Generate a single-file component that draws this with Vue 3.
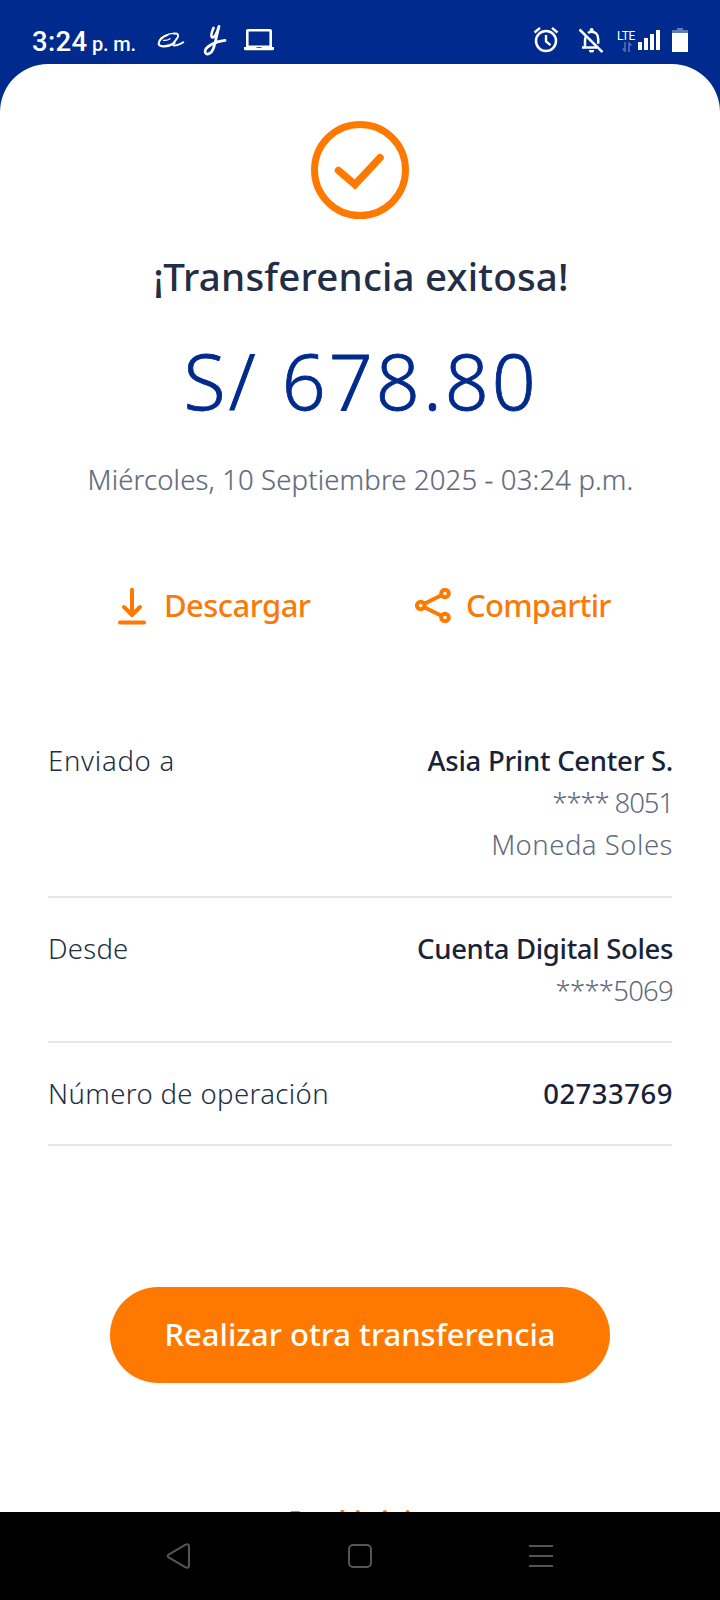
<script setup>
const details = [
  {
    label: 'Enviado a', labelClass: 'ls-08',
    lines: [
      { text: 'Asia Print Center S.', cls: 'strong ls-n03' },
      { text: '**** 8051', cls: 'muted ls-n11' },
      { text: 'Moneda Soles', cls: 'muted ls-05' },
    ],
  },
  {
    label: 'Desde', labelClass: 'ls-03',
    lines: [
      { text: 'Cuenta Digital Soles', cls: 'strong ls-n04' },
      { text: '****5069', cls: 'muted ls-n08' },
    ],
  },
  {
    label: 'Número de operación', labelClass: 'ls-04',
    lines: [{ text: '02733769', cls: 'strong ls-05' }],
  },
]
</script>

<template>
  <div class="screen">
    <header class="status">
      <div class="clock"><span class="time">3:24</span><span class="ampm">p. m.</span></div>
      <svg class="ic-swirl" width="30" height="32" viewBox="156 24 30 32" fill="none" stroke="#fff" stroke-linecap="round" stroke-linejoin="round">
        <path stroke-width="2.200" d="M167.500 35c-4.500 1.200-8.800 5-8.800 8.700 0 4 9.500 3.400 15.800-.7" />
        <path stroke-width="1.300" d="M163.500 40.300c2.500.2 5-.4 6.500-1.600M161 38.500c4-3.500 11.500-6.300 15-4.700" />
        <path stroke-width="1.900" d="M173.500 33.600c4.500-.8 5.700 1.400 3.800 4.400-1.700 2.700-4.900 5.200-4.300 6.800.8 1.700 6.800-.1 10.300-2.600" />
      </svg>
      <svg class="ic-script" width="26" height="32" viewBox="202 24 26 32" fill="none" stroke="#fff" stroke-width="2.700" stroke-linecap="round" stroke-linejoin="round">
        <path d="M213.500 28c-1.500 3.500-3.200 8.300-1.300 9.300 2.300 1 4.800-4.300 6.800-11-2.200 8.500-3.700 17-5.700 22.500-1.700 4.600-6.300 6.700-7.800 4-1.500-2.900 2.500-6.500 6.800-8.800 4-2 8.500-3.200 12.700-3.600" />
      </svg>
      <svg class="ic-laptop" width="32" height="24" viewBox="243 28 32 24" fill="#fff">
        <path fill-rule="evenodd" d="M248 29h22a2 2 0 0 1 2 2v16h-26V31a2 2 0 0 1 2-2zm.600 2.500V45.500h20.800V31.500z" />
        <path fill-rule="evenodd" d="M244 47h30v2q0 1.300-1.300 1.300h-27.400q-1.300 0-1.300-1.300zm12.500-.5v1.300h5v-1.300z" />
      </svg>

      <svg class="ic-alarm" width="26" height="28" viewBox="533 26 26 28" fill="none" stroke="#fff">
        <circle cx="546" cy="41" r="10" stroke-width="2.500" />
        <path stroke-width="2.400" d="M546 35v6.500l4.500 3.600M534.500 32.500l5.500-4.600M557.500 32.500l-5.500-4.600" />
      </svg>
      <svg class="ic-bell" width="26" height="28" viewBox="578 26 26 28" fill="none" stroke="#fff">
        <path stroke-width="2.500" d="M585.900 36.500c-.7 1.300-.9 2.500-.9 4v6.300M582 47.500h15M588 33c1-.9 2.200-1.300 3.500-1.300 3.800 0 6.700 2.900 6.700 7.300v4.700" />
        <path fill="#fff" stroke="none" d="M589.700 31v-1.200a1.900 1.900 0 0 1 3.800 0V31zM588.900 50h5.200a2.600 2.600 0 0 1-5.200 0z" />
        <path stroke-width="2.500" d="M579.500 29.500l23 22.700" />
      </svg>
      <div class="network">
        <span class="lte">LTE</span>
        <svg class="arrows" width="10" height="10" viewBox="0 0 10 10" fill="none" stroke="#fff" stroke-width="1.500" opacity=".35">
          <path d="M3 0v9L.6 6.500M7 10V1l2.400 2.500" />
        </svg>
      </div>
      <svg class="ic-signal" width="22" height="21" viewBox="0 0 22 21" fill="#fff">
        <path d="M0 12h4v8H0zM6 8h4v12H6zM12 4h4v16h-4zM18 0h4v20h-4z" />
      </svg>
      <svg class="ic-battery" width="16" height="24" viewBox="0 0 16 24" fill="#fff">
        <path opacity=".38" d="M5 0h6v2h5v3H0V2h5z" /><path d="M0 5h16v19H0z" />
      </svg>
    </header>

    <main class="sheet">
      <svg class="success" width="98" height="98" viewBox="0 0 98 98" fill="none" stroke="#ff7900">
        <circle cx="49" cy="49" r="45.500" stroke-width="7" />
        <path d="M27.500 49.500L44 63.500 69 36.800" stroke-width="7.500" stroke-linecap="round" />
      </svg>
      <h1 class="title">¡Transferencia exitosa!</h1>
      <div class="amount">S/ 678.80</div>
      <div class="date">Miércoles, 10 Septiembre 2025 - 03:24 p.m.</div>

      <div class="actions">
        <div class="action download">
          <svg width="28" height="38" viewBox="0 0 28 38" fill="none" stroke="#ff7900" stroke-width="4" stroke-linecap="round" stroke-linejoin="round">
            <path d="M14 2.800V27M6 20l8 8 8-8M2 35.500h24" />
          </svg>
          <span>Descargar</span>
        </div>
        <div class="action share">
          <svg width="36" height="38" viewBox="0 0 36 38" fill="none" stroke="#ff7900" stroke-width="4">
            <circle cx="5.700" cy="18.500" r="3.800" /><circle cx="30" cy="6.500" r="3.800" /><circle cx="30" cy="30.500" r="3.800" />
            <path d="M9.300 16.700L26.400 8.300M9.300 20.300l17.100 8.400" />
          </svg>
          <span>Compartir</span>
        </div>
      </div>

      <section class="details">
        <div v-for="row in details" :key="row.label" class="row">
          <span :class="row.labelClass">{{ row.label }}</span>
          <div class="values">
            <span v-for="line in row.lines" :key="line.text" :class="line.cls">{{ line.text }}</span>
          </div>
        </div>
      </section>

      <button class="primary">Realizar otra transferencia</button>
      <a class="home">Ir al inicio</a>
    </main>

    <nav class="navbar">
      <svg width="28" height="30" viewBox="0 0 28 30"><path d="M4 13.300L20.500 3.700Q24 2.300 24 5.500V24.500Q24 27.700 20.500 26.300L4 16.700Q1.300 15 4 13.300z" /></svg>
      <svg width="28" height="30" viewBox="0 0 28 30"><rect x="3" y="4" width="22" height="22" rx="4" /></svg>
      <svg width="28" height="30" viewBox="0 0 28 30"><path d="M2 5h24M2 15h24M2 25h24" /></svg>
    </nav>
  </div>
</template>

<style>
body { margin: 0; background: #000; }
</style>

<style scoped>
.screen {
  width: 720px;
  height: 1600px;
  display: flex;
  flex-direction: column;
  overflow: hidden;
  background: #002a8d;
  font-family: "Noto Sans", "Open Sans", sans-serif;
}
.status {
  height: 64px;
  flex: none;
  display: flex;
  align-items: flex-start;
  box-sizing: border-box;
  padding-left: 32px;
  color: #fff;
  font-family: Roboto, sans-serif;
}
.status svg { display: block; flex: none; }
.clock {
  width: 124px;
  margin-top: 26px;
  display: flex;
  align-items: baseline;
  line-height: 32px;
  white-space: nowrap;
}
.time { font-size: 27.5px; font-weight: 500; letter-spacing: .3px; width: 60px; }
.ampm { font-size: 20px; font-weight: 500; letter-spacing: -.2px; }
.ic-swirl { margin-top: 24px; }
.ic-script { margin: 24px 0 0 16px; }
.ic-laptop { margin: 28px 0 0 15px; }
.ic-alarm { margin: 26px 0 0 258px; }
.ic-bell { margin: 26px 0 0 19px; }
.network { width: 21px; margin: 30px 0 0 13px; }
.lte { display: block; font-size: 12px; font-weight: 400; line-height: 13px; height: 12px; letter-spacing: -.2px; }
.arrows { margin-left: 5px; }
.ic-signal { margin: 30px 0 0 0; }
.ic-battery { margin: 28px 0 0 12px; }

.sheet {
  flex: 1;
  min-height: 0;
  display: flex;
  flex-direction: column;
  align-items: center;
  overflow: hidden;
  box-sizing: border-box;
  padding-top: 57px;
  background: #fff;
  border-radius: 48px 48px 0 0;
  white-space: nowrap;
}
.sheet > * { flex: none; }
.success { display: block; }
.title {
  margin: 33px -2px 0 0;
  font-size: 38.5px;
  line-height: 48px;
  font-weight: 500;
  letter-spacing: .2px;
  color: #212e45;
}
.amount {
  margin: 36px -2.5px 0 0;
  font-size: 77px;
  line-height: 90px;
  font-weight: 300;
  letter-spacing: 3.1px;
  color: #002a8d;
  -webkit-text-stroke: .8px #002a8d;
}
.date {
  margin: 33px -1px 0 0;
  font-size: 27.5px;
  line-height: 42px;
  font-weight: 300;
  letter-spacing: .14px;
  color: #626a7c;
  -webkit-text-stroke: .2px #626a7c;
}
.actions {
  display: flex;
  width: 720px;
  box-sizing: border-box;
  margin-top: 84px;
  padding-left: 118px;
}
.action {
  display: flex;
  height: 40px;
  font-size: 31px;
  line-height: 40px;
  font-weight: 500;
  color: #f97a0a;
}
.action svg { margin-top: 2px; flex: none; }
.download { width: 297px; gap: 18px; letter-spacing: -.55px; }
.share { gap: 15px; letter-spacing: -.75px; }

.details {
  width: 624px;
  margin-top: 115px;
  font-size: 27.5px;
  line-height: 42px;
  font-weight: 300;
  color: #212e45;
}
.row {
  display: flex;
  justify-content: space-between;
  padding: 30px 0 29px;
  border-bottom: 2px solid #e6e6e6;
}
.row:first-child { padding: 0 0 30px; }
.values { display: flex; flex-direction: column; align-items: flex-end; margin-right: -1px; }
.strong { font-weight: 500; color: #18233a; }
.muted { color: #626a7c; }
.ls-08 { letter-spacing: .75px; }
.ls-05 { letter-spacing: .5px; }
.ls-04 { letter-spacing: .38px; }
.ls-03 { letter-spacing: .25px; }
.ls-n03 { letter-spacing: -.26px; }
.ls-n04 { letter-spacing: -.33px; }
.ls-n08 { letter-spacing: -.75px; }
.ls-n11 { letter-spacing: -1.1px; }

.primary {
  width: 500px;
  height: 96px;
  margin: 141px 0 0;
  padding: 0 0 2px;
  border: 0;
  border-radius: 48px;
  background: #ff7900;
  color: #fff;
  font: 500 31px/40px "Noto Sans", sans-serif;
}
.home {
  margin-top: 118px;
  font-size: 31px;
  line-height: 40px;
  font-weight: 500;
  letter-spacing: -.4px;
  color: #ff7900;
}

.navbar {
  flex: none;
  height: 88px;
  display: flex;
  justify-content: space-between;
  box-sizing: border-box;
  padding: 29px 165px 0 165px;
  background: #000;
}
.navbar svg { fill: none; stroke: #555; stroke-width: 2; }
</style>
